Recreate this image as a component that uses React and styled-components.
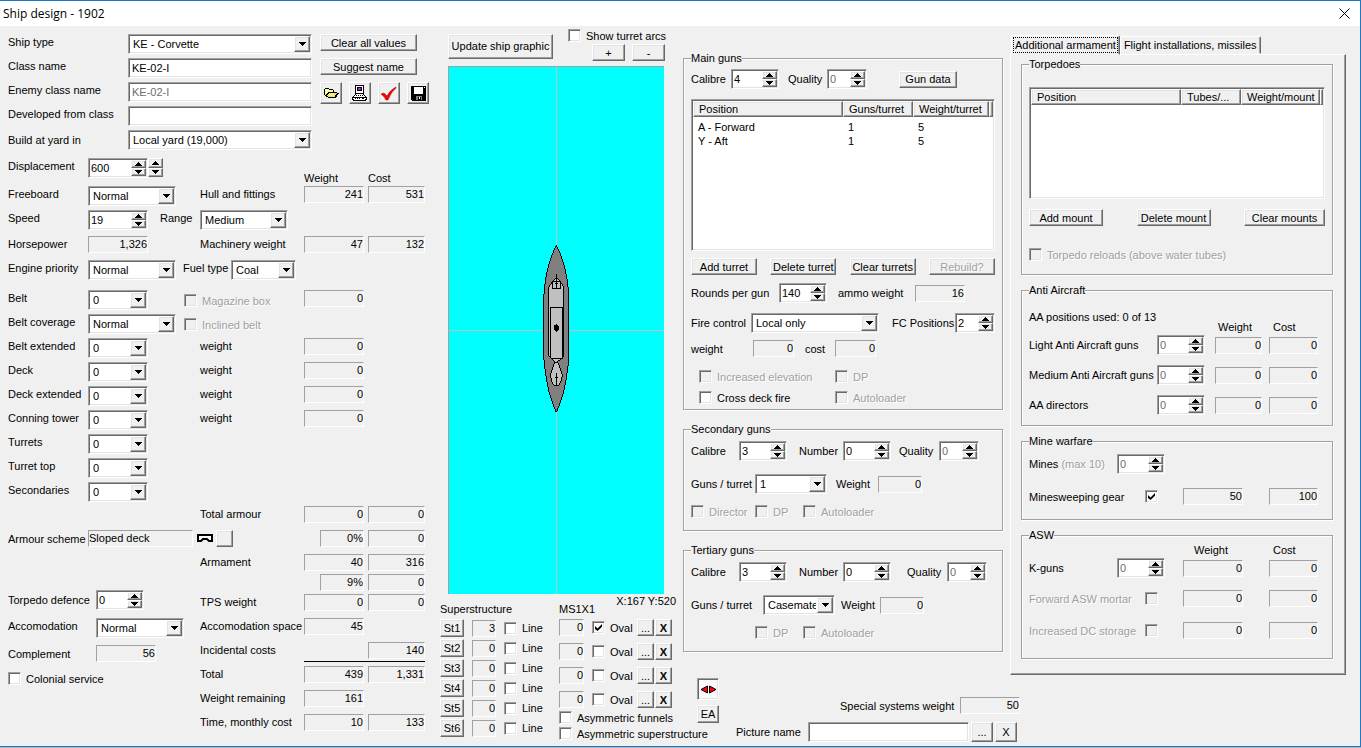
import React from "react";
import styled, { createGlobalStyle, css } from "styled-components";

const GlobalStyle = createGlobalStyle`
	* {
		box-sizing: border-box;
	}

	body {
		margin: 0;
		background: #b4b4b4;
		color: #000;
		font: 11px/16px "Liberation Sans", Arial, sans-serif;
	}

	button, input, select, table {
		font: inherit;
		color: inherit;
	}

	svg {
		flex: none;
	}
`;

const sunken = css`
	border: 1px solid;
	border-color: #a0a0a0 #fff #fff #a0a0a0;
	box-shadow: inset 1px 1px 0 #696969, inset -1px -1px 0 #e3e3e3;
`;

const raised = css`
	border: 1px solid;
	border-color: #fff #696969 #696969 #fff;
	box-shadow: inset -1px -1px 0 #a0a0a0, inset 1px 1px 0 #e3e3e3;
`;

const embossed = css`
	color: #a0a0a0;
	text-shadow: 1px 1px 0 #fff;
`;

/* Window */

const Window = styled.main`
	display: flex;
	flex-direction: column;
	min-height: calc(100vh - 1px);
	background: #f0f0f0;
	border: solid #1979ca;
	border-width: 1px 1px 1px 0;
`;

const TitleBar = styled.header`
	display: flex;
	align-items: center;
	justify-content: space-between;
	height: 25px;
	padding: 0 10px 0 3px;
	background: #fff;
`;

const Title = styled.h1`
	margin: 0;
	font: 12px/16px "Open Sans", "Noto Sans", sans-serif;
`;

const CloseButton = styled.button`
	display: flex;
	padding: 0;
	border: 0;
	background: none;
`;

const Body = styled.div`
	display: grid;
	grid-template-columns: 436px 247px minmax(663px, 1fr);
`;

/* Form parts */

const Row = styled.div`
	display: grid;
	grid-template-columns: ${p => p.$cols};
	align-content: ${p => p.$stretch ? "stretch" : "start"};
	align-items: ${p => p.$stretch ? "start" : "center"};
	min-height: ${p => p.$h || 24}px;
`;

const Label = styled.label`
	white-space: nowrap;
	${p => p.$disabled && embossed}
`;

const Heading = styled.span`
	align-self: end;
	white-space: nowrap;
	padding-left: ${p => p.$indent || 0}px;
`;

const Readout = styled.output`
	display: block;
	flex: none;
	width: ${p => p.$w || 60}px;
	height: 17px;
	border: 1px solid;
	border-color: #a0a0a0 #fff #fff #a0a0a0;
	line-height: 15px;
	text-align: ${p => p.$align || "right"};
	white-space: nowrap;
`;

const Button = styled.button`
	${raised}
	display: flex;
	align-items: center;
	justify-content: center;
	flex: none;
	width: ${p => p.$w}px;
	height: ${p => p.$h || 17}px;
	padding: 0;
	background: #f0f0f0;
	white-space: nowrap;
	font-weight: ${p => p.$bold ? "bold" : "normal"};

	&:disabled {
		${embossed}
	}
`;

const ToggleButton = styled(Button)`
	${sunken}
	background: #fafafa;
`;

const TextInput = styled.input`
	${sunken}
	width: ${p => p.$w}px;
	height: 20px;
	padding: 0 3px;
	background: #fff;

	&:disabled {
		color: #6d6d6d;
	}
`;

const SelectFrame = styled.span`
	${sunken}
	display: grid;
	width: ${p => p.$w}px;
	height: 20px;
	padding: 1px;
	background: #fff;
`;

const NativeSelect = styled.select`
	grid-area: 1 / 1;
	appearance: none;
	width: 100%;
	min-width: 0;
	padding: 0 17px 0 3px;
	border: 0;
	border-radius: 0;
	background: none;
`;

const SelectArrow = styled.span`
	${raised}
	grid-area: 1 / 1;
	justify-self: end;
	display: flex;
	align-items: center;
	justify-content: center;
	width: 16px;
	background: #f0f0f0;
	pointer-events: none;
`;

const SpinFrame = styled.span`
	${sunken}
	display: flex;
	width: ${p => p.$w}px;
	height: 20px;
	padding: 1px;
	background: #fff;
`;

const SpinInput = styled.input`
	flex: 1;
	min-width: 0;
	width: 0;
	padding: 0 1px;
	border: 0;
	background: none;

	&:disabled {
		color: #6d6d6d;
	}
`;

const SpinButtons = styled.span`
	display: flex;
	flex-direction: column;
	width: 15px;
`;

const SpinButton = styled.button`
	${raised}
	display: flex;
	flex: 1;
	align-items: center;
	justify-content: center;
	padding: 0;
	background: #f0f0f0;
`;

const Box = styled.input`
	${sunken}
	appearance: none;
	flex: none;
	width: 13px;
	height: 13px;
	margin: 0;
	background: #fff;

	&:disabled {
		background: #f0f0f0;
	}

	&:checked::before {
		content: "";
		display: block;
		width: 7px;
		height: 7px;
		margin: 2px;
		background: #000;
		clip-path: polygon(0 30%, 36% 64%, 100% 0, 100% 40%, 36% 100%, 0 70%);
	}
`;

const CheckLabel = styled.label`
	display: flex;
	align-items: center;
	gap: 5px;
	height: 13px;
	white-space: nowrap;
	${p => p.$disabled && embossed}
`;

const Group = styled.fieldset`
	min-width: 0;
	margin: 0;
	padding: ${p => p.$top}px 7px ${p => p.$bottom}px;
	border: 1px solid #a0a0a0;
	box-shadow: 1px 1px 0 #fff, inset 1px 1px 0 #fff;
`;

const Legend = styled.legend`
	padding: 0;
	line-height: 14px;
	background: #f0f0f0;
`;

const Arrow = ({ up }) => (
	<svg width="7" height="4" shapeRendering="crispEdges" aria-hidden="true">
		<path d={up ? "M3 0h1v1h1v1h1v1h1v1H0V3h1V2h1V1h1z" : "M0 0h7v1H6v1H5v1H4v1H3V3H2V2H1V1H0z"} />
	</svg>
);

const Select = ({ id, w, value }) => (
	<SelectFrame $w={w}>
		<NativeSelect id={id} defaultValue={value}>
			<option>{value}</option>
		</NativeSelect>
		<SelectArrow><Arrow /></SelectArrow>
	</SelectFrame>
);

const Stepper = ({ name }) => (
	<SpinButtons>
		<SpinButton type="button" aria-label={`Increase ${name}`}><Arrow up /></SpinButton>
		<SpinButton type="button" aria-label={`Decrease ${name}`}><Arrow /></SpinButton>
	</SpinButtons>
);

const Spin = ({ id, w = 48, value, disabled }) => (
	<SpinFrame $w={w}>
		<SpinInput id={id} type="text" inputMode="numeric" defaultValue={value} disabled={disabled} />
		<Stepper name={id} />
	</SpinFrame>
);

const Check = ({ children, checked, disabled }) => (
	<CheckLabel $disabled={disabled}>
		<Box type="checkbox" defaultChecked={checked} disabled={disabled} />
		{children}
	</CheckLabel>
);

/* Icons */

const CloseIcon = () => (
	<svg width="11" height="11" viewBox="0 0 11 11" stroke="#000" aria-hidden="true">
		<path d="M0.5 0.5l10 10M10.5 0.5l-10 10" />
	</svg>
);

const FolderIcon = () => (
	<svg width="15" height="11" viewBox="0 0 15 11" shapeRendering="crispEdges" aria-hidden="true">
		<path d="M1 0h4v1h4v1h1v2h3v1h2v1h-1v1h-1v2h-1v1H4V9H2V8H1V7H0V1h1z" />
		<path d="M1 1h4v1h4v2H4v1H3v1H2v1H1z" fill="#ff9" />
		<path d="M5 5h8v1h-1v1h-1v2H4V8H3V7h1V6h1z" fill="#f0e060" />
		<path d="M5 5h1v1H5zM7 5h1v1H7zM9 5h1v1H9zM6 6h1v1H6zM8 6h1v1H8zM5 7h1v1H5zM7 7h1v1H7zM9 7h1v1H9z" fill="#ffc" />
	</svg>
);

const ComputerIcon = () => (
	<svg width="16" height="16" viewBox="0 0 16 16" shapeRendering="crispEdges" aria-hidden="true">
		<path d="M3 0h9v9H3z" />
		<path d="M4 1h7v7H4z" fill="#fff" />
		<path d="M5 2h5v4H5z" />
		<path d="M6 3h3v2H6z" fill="#c0c" />
		<path d="M7 3h1v1H7z" fill="#0c8" />
		<path d="M3 9h9v1h1v1h1v1h1v3h-1v1H1v-1H0v-3h1v-1h1v-1h1z" />
		<path d="M4 9h7v1h1v1h1v1H2v-1h1v-1h1z" fill="#fff" />
		<path d="M1 13h13v1h-1v1H2v-1H1z" fill="#fff" />
		<path d="M4 10h1v1H4zM6 10h1v1H6zM8 10h1v1H8zM10 10h1v1h-1zM3 13h1v1H3zM5 13h1v1H5zM7 13h1v1H7zM10 13h2v1h-2z" />
	</svg>
);

const TickIcon = () => (
	<svg width="16" height="15" viewBox="0 0 16 15" aria-hidden="true">
		<path d="M0 8l3-1 3 3Q9 4 15 1v1Q10 6 7 14H5Q3 10 0 8z" fill="#f00" stroke="#900" strokeWidth="0.5" />
	</svg>
);

const DiskIcon = () => (
	<svg width="15" height="15" viewBox="0 0 15 15" shapeRendering="crispEdges" aria-hidden="true">
		<path d="M0 0h15v15H1l-1-1z" />
		<path d="M3 1h9v7H3z" fill="#fff" />
		<path d="M13 1h1v1h-1z" fill="#fff" />
		<path d="M5 10h6v4H5z" fill="#808080" />
		<path d="M7 11h3v3H7z" />
		<path d="M8 11h1v2H8z" fill="#fff" />
	</svg>
);

const SlopedDeckIcon = () => (
	<svg width="16" height="9" viewBox="0 0 16 9" aria-hidden="true">
		<path d="M1 1h14v6h-3l-2-2H6L4 7H1z" fill="#fff" stroke="#000" strokeWidth="2" />
	</svg>
);

const MirrorIcon = () => (
	<svg width="17" height="9" viewBox="0 0 17 9" aria-hidden="true">
		<path d="M7.5 1v7L1 4.5zM9.5 1v7L16 4.5z" fill="#f00" stroke="#000" />
	</svg>
);

/* General data, left column */

const LeftColumn = styled.section`
	padding: 8px 12px 4px 8px;
`;

const IconBar = styled.div`
	display: flex;
	gap: 7px;
`;

const Identity = styled.div`
	margin-bottom: 4px;
`;

const DataRow = styled.div`
	display: grid;
	grid-template-columns: 80px minmax(0, 1fr) 64px 56px;
	align-items: start;
	min-height: ${p => p.$h || 24}px;
`;

const Controls = styled.div`
	display: grid;
	grid-template-columns: ${p => p.$cols || "112px 1fr"};
	align-items: start;
`;

const ArmourCheck = styled.div`
	padding-top: 4px;
`;

const StepperAlone = styled.span`
	display: flex;
	height: 19px;
`;

const SchemePicker = styled.div`
	display: flex;
	align-items: center;
	gap: 3px;
`;

const Lower = styled.div`
	display: grid;
	grid-template-columns: 192px 1fr;
`;

const Stack = styled.div`
	padding-top: ${p => p.$top || 0}px;
`;

const Sum = styled.div`
	display: grid;
	grid-template-columns: 164px 57px;
	column-gap: 4px;
	min-height: ${p => p.$h || 24}px;
	align-items: start;
`;

const SumName = styled.div`
	display: flex;
	justify-content: space-between;
	white-space: nowrap;
`;

const TotalRule = styled.hr`
	width: 121px;
	height: 1px;
	margin: -5px 0 4px 104px;
	border: 0;
	background: #000;
`;

const armour = [
	["Belt extended", true],
	["Deck", true],
	["Deck extended", true],
	["Conning tower", true],
	["Turrets"],
	["Turret top"],
	["Secondaries"],
];

const sums = [
	{ label: "Total armour", weight: "0", cost: "0" },
	{ label: "", weight: "0%", cost: "0", narrow: true },
	{ label: "Armament", weight: "40", cost: "316", h: 20 },
	{ label: "", weight: "9%", cost: "0", narrow: true, h: 20 },
	{ label: "TPS weight", weight: "0", cost: "0" },
	{ label: "Accomodation space", weight: "45" },
	{ label: "Incidental costs", cost: "140" },
	{ label: "Total", weight: "439", cost: "1,331", rule: true },
	{ label: "Weight remaining", weight: "161" },
	{ label: "Time, monthly cost", weight: "10", cost: "133" },
];

const IDENTITY = "120px 192px 1fr";

const GeneralData = () => (
	<LeftColumn>
		<Identity>
			<Row $cols={IDENTITY} $stretch>
				<Label htmlFor="ship-type">Ship type</Label>
				<Select id="ship-type" w={184} value="KE - Corvette" />
				<Button $w={97}>Clear all values</Button>
			</Row>
			<Row $cols={IDENTITY} $stretch>
				<Label htmlFor="class-name">Class name</Label>
				<TextInput id="class-name" $w={184} defaultValue="KE-02-I" />
				<Button $w={97}>Suggest name</Button>
			</Row>
			<Row $cols={IDENTITY} $stretch>
				<Label htmlFor="enemy-name">Enemy class name</Label>
				<TextInput id="enemy-name" $w={184} defaultValue="KE-02-I" disabled />
				<IconBar>
					<Button $w={22} $h={22} aria-label="Open"><FolderIcon /></Button>
					<Button $w={22} $h={22} aria-label="Print"><ComputerIcon /></Button>
					<Button $w={22} $h={22} aria-label="Check design"><TickIcon /></Button>
					<Button $w={22} $h={22} aria-label="Save"><DiskIcon /></Button>
				</IconBar>
			</Row>
			<Row $cols={IDENTITY} $stretch>
				<Label htmlFor="developed">Developed from class</Label>
				<TextInput id="developed" $w={184} />
			</Row>
			<Row $cols={IDENTITY}>
				<Label htmlFor="yard">Build at yard in</Label>
				<Select id="yard" w={184} value="Local yard (19,000)" />
			</Row>
		</Identity>

		<DataRow $h={28}>
			<Label htmlFor="displacement">Displacement</Label>
			<Controls $cols="60px 16px">
				<Spin id="displacement" w={60} value="600" />
				<StepperAlone><Stepper name="displacement by 100" /></StepperAlone>
			</Controls>
			<Heading>Weight</Heading>
			<Heading>Cost</Heading>
		</DataRow>
		<DataRow>
			<Label htmlFor="freeboard">Freeboard</Label>
			<Controls>
				<Select id="freeboard" w={88} value="Normal" />
				<span>Hull and fittings</span>
			</Controls>
			<Readout>241</Readout>
			<Readout $w={57}>531</Readout>
		</DataRow>
		<DataRow $h={26}>
			<Label htmlFor="speed">Speed</Label>
			<Controls $cols="72px 40px 1fr">
				<Spin id="speed" w={60} value="19" />
				<Label htmlFor="range">Range</Label>
				<Select id="range" w={88} value="Medium" />
			</Controls>
		</DataRow>
		<DataRow>
			<span>Horsepower</span>
			<Controls>
				<Readout>1,326</Readout>
				<span>Machinery weight</span>
			</Controls>
			<Readout>47</Readout>
			<Readout $w={57}>132</Readout>
		</DataRow>
		<DataRow $h={30}>
			<Label htmlFor="engine">Engine priority</Label>
			<Controls $cols="95px 48px 1fr">
				<Select id="engine" w={88} value="Normal" />
				<Label htmlFor="fuel">Fuel type</Label>
				<Select id="fuel" w={65} value="Coal" />
			</Controls>
		</DataRow>
		<DataRow>
			<Label htmlFor="belt">Belt</Label>
			<Controls $cols="96px 1fr">
				<Select id="belt" w={60} value="0" />
				<ArmourCheck><Check disabled>Magazine box</Check></ArmourCheck>
			</Controls>
			<Readout>0</Readout>
		</DataRow>
		<DataRow>
			<Label htmlFor="belt-coverage">Belt coverage</Label>
			<Controls $cols="96px 1fr">
				<Select id="belt-coverage" w={88} value="Normal" />
				<ArmourCheck><Check disabled>Inclined belt</Check></ArmourCheck>
			</Controls>
		</DataRow>
		{armour.map(([name, weighed]) => (
			<DataRow key={name}>
				<Label htmlFor={name}>{name}</Label>
				<Controls>
					<Select id={name} w={60} value="0" />
					{weighed && <span>weight</span>}
				</Controls>
				{weighed && <Readout>0</Readout>}
			</DataRow>
		))}

		<Lower>
			<Stack $top={24}>
				<Row $cols="80px 109px 36px" $h={60}>
					<span>Armour scheme</span>
					<Readout $w={105} $align="left">Sloped deck</Readout>
					<SchemePicker>
						<SlopedDeckIcon />
						<Button $w={17} aria-label="Choose armour scheme" />
					</SchemePicker>
				</Row>
				<Row $cols="88px 1fr" $h={28}>
					<Label htmlFor="torpedo-defence">Torpedo defence</Label>
					<Spin id="torpedo-defence" value="0" />
				</Row>
				<Row $cols="88px 1fr" $h={27} $stretch>
					<Label htmlFor="accomodation">Accomodation</Label>
					<Select id="accomodation" w={88} value="Normal" />
				</Row>
				<Row $cols="88px 1fr" $h={27}>
					<span>Complement</span>
					<Readout>56</Readout>
				</Row>
				<Check>Colonial service</Check>
			</Stack>
			<Stack>
				{sums.map((s, i) => (
					<React.Fragment key={i}>
						{s.rule && <TotalRule />}
						<Sum $h={s.h}>
							<SumName>
								<span>{s.label}</span>
								{s.weight && <Readout $w={s.narrow ? 44 : 60}>{s.weight}</Readout>}
							</SumName>
							{s.cost && <Readout $w={57}>{s.cost}</Readout>}
						</Sum>
					</React.Fragment>
				))}
			</Stack>
		</Lower>
	</LeftColumn>
);

/* Ship graphic, middle column */

const GraphicColumn = styled.section`
	display: flex;
	flex-direction: column;
	padding: 0 7px 0 4px;
`;

const GraphicBar = styled.div`
	display: flex;
	align-items: center;
	gap: 15px;
	height: 40px;
	padding-left: 8px;
`;

const GraphicOptions = styled.div`
	display: flex;
	flex-direction: column;
	gap: 2px;
	align-self: flex-start;
	padding-top: 3px;
`;

const ZoomButtons = styled.div`
	display: flex;
	gap: 7px;
	padding-left: 24px;
`;

const Canvas = styled.div`
	display: flex;
	margin: 0 12px 0 8px;
	border: solid #a0a0a0;
	border-width: 1px 0 0 1px;
	background: #0ff;

	svg {
		width: 100%;
		height: auto;
	}
`;

const Captions = styled.div`
	display: grid;
	grid-template-columns: 119px 40px 1fr;
	height: 25px;
	padding-bottom: 2px;
	align-items: end;
`;

const Coordinates = styled.span`
	align-self: start;
	line-height: 14px;
	text-align: right;
	white-space: nowrap;
`;

const Parts = styled.div`
	display: grid;
	grid-template-columns: 119px minmax(0, 1fr);
`;

const PartList = styled.div`
	display: flex;
	flex-direction: column;
	gap: ${p => p.$gap}px;
`;

const PartRow = styled.div`
	display: flex;
	align-items: center;
	justify-content: space-between;
	padding-right: 4px;
`;

const PartFields = styled.div`
	display: flex;
	align-items: center;
	gap: 8px;
`;

const PartButtons = styled.div`
	display: flex;
	gap: 1px;
`;

const Asymmetry = styled.div`
	display: flex;
	flex-direction: column;
	gap: 3px;
	padding-top: 3px;
`;

const Ship = () => (
	<svg viewBox="0 0 215 527" shapeRendering="crispEdges" role="img" aria-label="Ship seen from above">
		<path d="M107 0h1v527h-1zM0 263h215v1H0z" fill="#c0c0c0" />
		<g transform="translate(71 168) scale(0.3333)" stroke="#000" strokeWidth="3" fill="#c0c0c0">
			<path
				d="M109 30L96 60 86 90 78 125 74 155 71 190V365L74 395 80 435 88 475 98 505 109 532 120 505 130 475 138 435 144 395 147 365V190L144 155 140 125 132 90 122 60z"
				fill="#808080"
			/>
			<path d="M109 127L120 139 132 157V362L122 372 109 384 96 372 86 362V157L98 139z" />
			<path d="M92 217h36v153H92zM97 139h24v23H97z" />
			<path d="M103 384h12l6 17 6 21-6 22-6 9h-12l-6-9-6-22 6-21z" />
			<path d="M109 118v42M104 147h10M109 415v38M104 427h9" />
			<ellipse cx="109" cy="279" rx="6" ry="10" fill="#000" />
		</g>
	</svg>
);

const ShipGraphic = () => (
	<GraphicColumn>
		<GraphicBar>
			<Button $w={105} $h={25}>Update ship graphic</Button>
			<GraphicOptions>
				<Check>Show turret arcs</Check>
				<ZoomButtons>
					<Button $w={33} aria-label="Zoom in">+</Button>
					<Button $w={33} aria-label="Zoom out">-</Button>
				</ZoomButtons>
			</GraphicOptions>
		</GraphicBar>
		<Canvas><Ship /></Canvas>
		<Captions>
			<span>Superstructure</span>
			<span>MS1X1</span>
			<Coordinates>X:167 Y:520</Coordinates>
		</Captions>
		<Parts>
			<PartList $gap={2}>
				{[3, 0, 0, 0, 0, 0].map((n, i) => (
					<PartFields key={i}>
						<Button $w={24} $h={18}>St{i + 1}</Button>
						<Readout $w={24}>{n}</Readout>
						<Check>Line</Check>
					</PartFields>
				))}
			</PartList>
			<div>
				<PartList $gap={7}>
					{[true, false, false, false].map((on, i) => (
						<PartRow key={i}>
							<PartFields>
								<Readout $w={25}>0</Readout>
								<Check checked={on}>Oval</Check>
							</PartFields>
							<PartButtons>
								<Button $w={17} aria-label="Edit funnel">...</Button>
								<Button $w={17} $bold aria-label="Remove funnel">X</Button>
							</PartButtons>
						</PartRow>
					))}
				</PartList>
				<Asymmetry>
					<Check>Asymmetric funnels</Check>
					<Check>Asymmetric superstructure</Check>
				</Asymmetry>
			</div>
		</Parts>
	</GraphicColumn>
);

/* Guns */

const Upper = styled.div`
	display: flex;
	align-items: flex-start;
	gap: 7px;
`;

const GunsColumn = styled.section`
	display: flex;
	flex: 1 1 320px;
	flex-direction: column;
	gap: 12px;
	padding-top: 25px;
`;

const ListFrame = styled.div`
	${sunken}
	height: ${p => p.$h}px;
	padding: 1px;
	background: #fff;
`;

const ListTable = styled.table`
	width: 100%;
	border-collapse: separate;
	border-spacing: 0;
	table-layout: fixed;
	line-height: 14px;
	text-align: left;

	th {
		${raised}
		height: 16px;
		padding: 0 0 0 5px;
		background: #f0f0f0;
		font-weight: normal;
		white-space: nowrap;
	}

	th:last-child {
		padding: 0;
	}

	td {
		padding: 0 0 0 5px;
	}

	tbody tr:first-child td {
		padding-top: 3px;
	}
`;

const ButtonRow = styled.div`
	display: flex;
	justify-content: space-between;
	padding: ${p => p.$pad};
`;

const List = ({ h, columns, widths, rows }) => (
	<ListFrame $h={h}>
		<ListTable>
			<colgroup>
				<col />
				<col width={widths[0]} />
				<col width={widths[1]} />
				<col width={widths[2]} />
			</colgroup>
			<thead>
				<tr>
					{columns.map(c => <th key={c}>{c}</th>)}
					<th aria-label="Spare" />
				</tr>
			</thead>
			<tbody>
				{rows.map(r => (
					<tr key={r[0]}>{r.map((cell, i) => <td key={i}>{cell}</td>)}</tr>
				))}
			</tbody>
		</ListTable>
	</ListFrame>
);

const MainGuns = () => (
	<Group $top={4} $bottom={5}>
		<Legend>Main guns</Legend>
		<Row $cols="40px 57px 39px 72px 1fr" $h={30}>
			<Label htmlFor="main-calibre">Calibre</Label>
			<Spin id="main-calibre" value="4" />
			<Label htmlFor="main-quality">Quality</Label>
			<Spin id="main-quality" w={40} value="0" disabled />
			<Button $w={58}>Gun data</Button>
		</Row>
		<List
			h={152}
			columns={["Position", "Guns/turret", "Weight/turret"]}
			widths={[70, 76, 4]}
			rows={[["A - Forward", "1", "5"], ["Y - Aft", "1", "5"]]}
		/>
		<ButtonRow $pad="7px 0 8px">
			<Button $w={66}>Add turret</Button>
			<Button $w={66}>Delete turret</Button>
			<Button $w={66}>Clear turrets</Button>
			<Button $w={66} disabled>Rebuild?</Button>
		</ButtonRow>
		<Row $cols="88px 59px 77px 1fr" $h={30}>
			<Label htmlFor="rounds">Rounds per gun</Label>
			<Spin id="rounds" value="140" />
			<span>ammo weight</span>
			<Readout $w={50}>16</Readout>
		</Row>
		<Row $cols="60px 141px 63px 1fr" $h={27}>
			<Label htmlFor="fire-control">Fire control</Label>
			<Select id="fire-control" w={128} value="Local only" />
			<Label htmlFor="fc-positions">FC Positions</Label>
			<Spin id="fc-positions" w={40} value="2" />
		</Row>
		<Row $cols="62px 52px 30px 1fr" $h={30}>
			<span>weight</span>
			<Readout $w={41}>0</Readout>
			<span>cost</span>
			<Readout $w={41}>0</Readout>
		</Row>
		<Row $cols="8px 136px 1fr" $h={21}>
			<span />
			<Check disabled>Increased elevation</Check>
			<Check disabled>DP</Check>
		</Row>
		<Row $cols="8px 136px 1fr" $h={13}>
			<span />
			<Check>Cross deck fire</Check>
			<Check disabled>Autoloader</Check>
		</Row>
	</Group>
);

const SecondaryGuns = () => (
	<Group $top={5} $bottom={12}>
		<Legend>Secondary guns</Legend>
		<Row $cols="48px 60px 44px 56px 40px 1fr" $h={33}>
			<Label htmlFor="sec-calibre">Calibre</Label>
			<Spin id="sec-calibre" value="3" />
			<Label htmlFor="sec-number">Number</Label>
			<Spin id="sec-number" value="0" />
			<Label htmlFor="sec-quality">Quality</Label>
			<Spin id="sec-quality" w={40} value="0" disabled />
		</Row>
		<Row $cols="64px 81px 42px 1fr" $h={31}>
			<Label htmlFor="sec-turret">Guns / turret</Label>
			<Select id="sec-turret" w={72} value="1" />
			<span>Weight</span>
			<Readout $w={44}>0</Readout>
		</Row>
		<Row $cols="64px 48px 1fr" $h={13}>
			<Check disabled>Director</Check>
			<Check disabled>DP</Check>
			<Check disabled>Autoloader</Check>
		</Row>
	</Group>
);

const TertiaryGuns = () => (
	<Group $top={5} $bottom={12}>
		<Legend>Tertiary guns</Legend>
		<Row $cols="48px 60px 44px 64px 40px 1fr" $h={33}>
			<Label htmlFor="ter-calibre">Calibre</Label>
			<Spin id="ter-calibre" value="3" />
			<Label htmlFor="ter-number">Number</Label>
			<Spin id="ter-number" value="0" />
			<Label htmlFor="ter-quality">Quality</Label>
			<Spin id="ter-quality" w={40} value="0" disabled />
		</Row>
		<Row $cols="72px 78px 39px 1fr" $h={31}>
			<Label htmlFor="ter-turret">Guns / turret</Label>
			<Select id="ter-turret" w={72} value="Casemates" />
			<span>Weight</span>
			<Readout $w={44}>0</Readout>
		</Row>
		<Row $cols="64px 48px 1fr" $h={13}>
			<span />
			<Check disabled>DP</Check>
			<Check disabled>Autoloader</Check>
		</Row>
	</Group>
);

/* Additional armament */

const TabsColumn = styled.section`
	flex: 1 1 336px;
	padding-top: 9px;
`;

const TabList = styled.div`
	display: flex;
	align-items: flex-end;
	padding-left: 1px;
`;

const Tab = styled.button`
	height: ${p => p.$active ? 20 : 18}px;
	margin-bottom: ${p => p.$active ? -1 : 0}px;
	padding: 0 2px;
	border: 1px solid;
	border-color: #fff #696969 transparent #fff;
	border-radius: 2px 2px 0 0;
	background: #f0f0f0;
	box-shadow: inset -1px 0 0 #a0a0a0;
	line-height: 14px;
	white-space: nowrap;

	span {
		display: block;
		padding: 0 1px;
		outline: ${p => p.$active ? "1px dotted #000" : "none"};
	}
`;

const TabPanel = styled.div`
	display: flex;
	flex-direction: column;
	gap: 8px;
	padding: 2px 12px 15px 10px;
	border: 1px solid;
	border-color: #fff #696969 #696969 #fff;
	box-shadow: inset -1px -1px 0 #a0a0a0;
`;

const Muted = styled.span`
	${embossed}
`;

const AA = "128px 58px 54px 1fr";
const ASW = "88px 66px 86px 1fr";
const GEAR = "116px 38px 86px 1fr";

const AdditionalArmament = () => (
	<TabsColumn>
		<TabList role="tablist">
			<Tab role="tab" aria-selected="true" $active><span>Additional armament</span></Tab>
			<Tab role="tab" aria-selected="false"><span>Flight installations, missiles</span></Tab>
		</TabList>
		<TabPanel role="tabpanel">
			<Group $top={16} $bottom={13}>
				<Legend>Torpedoes</Legend>
				<List h={112} columns={["Position", "Tubes/...", "Weight/mount"]} widths={[60, 79, 3]} rows={[]} />
				<ButtonRow $pad="10px 0 22px">
					<Button $w={74}>Add mount</Button>
					<Button $w={74}>Delete mount</Button>
					<Button $w={81}>Clear mounts</Button>
				</ButtonRow>
				<Check disabled>Torpedo reloads (above water tubes)</Check>
			</Group>
			<Group $top={12} $bottom={0}>
				<Legend>Anti Aircraft</Legend>
				<Row $cols={AA} $h={26} $stretch>
					<span>AA positions used: 0 of 13</span>
					<span />
					<Heading $indent={3}>Weight</Heading>
					<Heading $indent={4}>Cost</Heading>
				</Row>
				{["Light Anti Aircraft guns", "Medium Anti Aircraft guns", "AA directors"].map(name => (
					<Row $cols={AA} $h={30} key={name}>
						<Label htmlFor={name}>{name}</Label>
						<Spin id={name} value="0" disabled />
						<Readout $w={47}>0</Readout>
						<Readout $w={49}>0</Readout>
					</Row>
				))}
			</Group>
			<Group $top={6} $bottom={14}>
				<Legend>Mine warfare</Legend>
				<Row $cols="88px 1fr" $h={34}>
					<Label htmlFor="mines">Mines <Muted>(max 10)</Muted></Label>
					<Spin id="mines" value="0" disabled />
				</Row>
				<Row $cols={GEAR} $h={17}>
					<Label htmlFor="gear">Minesweeping gear</Label>
					<Box id="gear" type="checkbox" defaultChecked />
					<Readout>50</Readout>
					<Readout $w={49}>100</Readout>
				</Row>
			</Group>
			<Group $top={0} $bottom={4}>
				<Legend>ASW</Legend>
				<Row $cols={ASW} $h={16} $stretch>
					<span />
					<span />
					<Heading $indent={11}>Weight</Heading>
					<Heading $indent={4}>Cost</Heading>
				</Row>
				<Row $cols={ASW} $h={32}>
					<Label htmlFor="k-guns">K-guns</Label>
					<Spin id="k-guns" value="0" disabled />
					<Readout>0</Readout>
					<Readout $w={49}>0</Readout>
				</Row>
				{["Forward ASW mortar", "Increased DC storage"].map(name => (
					<Row $cols={GEAR} $h={32} key={name}>
						<Label htmlFor={name} $disabled>{name}</Label>
						<Box id={name} type="checkbox" disabled />
						<Readout>0</Readout>
						<Readout $w={49}>0</Readout>
					</Row>
				))}
			</Group>
		</TabPanel>
	</TabsColumn>
);

/* Bottom strip */

const RightArea = styled.div`
	padding-right: 14px;
`;

const Strip = styled.div`
	display: flex;
	gap: 17px;
	padding: 3px 0 0 14px;
`;

const SideButtons = styled.div`
	display: flex;
	flex-direction: column;
	gap: 5px;
`;

const StripForm = styled.div`
	padding-top: 19px;
`;

const BottomStrip = () => (
	<Strip>
		<SideButtons>
			<ToggleButton $w={22} $h={22} aria-label="Mirror"><MirrorIcon /></ToggleButton>
			<Button $w={22} $h={18}>EA</Button>
		</SideButtons>
		<StripForm>
			<Row $cols="104px 120px 60px" $h={25}>
				<span />
				<span>Special systems weight</span>
				<Readout>50</Readout>
			</Row>
			<Row $cols="72px 163px 24px 24px" $h={20}>
				<Label htmlFor="picture">Picture name</Label>
				<TextInput id="picture" $w={161} />
				<Button $w={22} $h={20} aria-label="Browse">...</Button>
				<Button $w={22} $h={20} aria-label="Clear picture">X</Button>
			</Row>
		</StripForm>
	</Strip>
);

const App = () => (
	<Window>
		<GlobalStyle />
		<TitleBar>
			<Title>Ship design - 1902</Title>
			<CloseButton aria-label="Close"><CloseIcon /></CloseButton>
		</TitleBar>
		<Body>
			<GeneralData />
			<ShipGraphic />
			<RightArea>
				<Upper>
					<GunsColumn>
						<MainGuns />
						<SecondaryGuns />
						<TertiaryGuns />
					</GunsColumn>
					<AdditionalArmament />
				</Upper>
				<BottomStrip />
			</RightArea>
		</Body>
	</Window>
);

export default App;
